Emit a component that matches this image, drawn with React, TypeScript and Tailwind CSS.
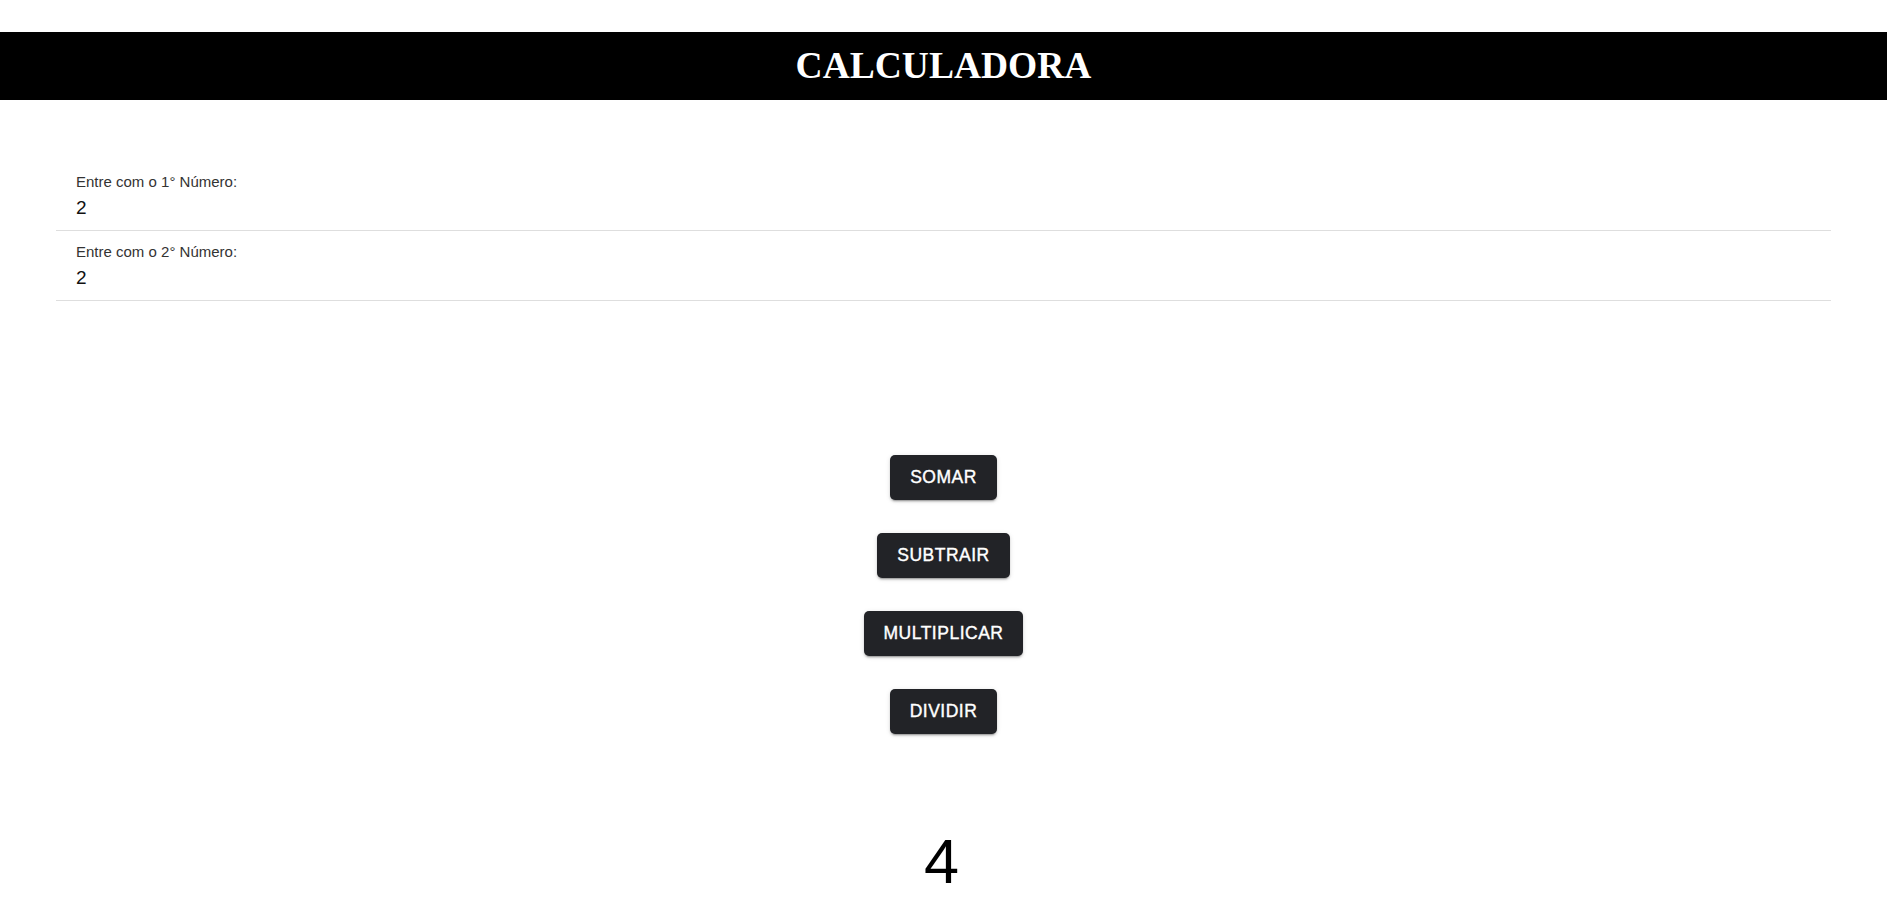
import { useState } from 'react';

const sans = { fontFamily: '"Liberation Sans", Arial, sans-serif' };

const ops = [
  { label: 'SOMAR', fn: (a: number, b: number) => a + b },
  { label: 'SUBTRAIR', fn: (a: number, b: number) => a - b },
  { label: 'MULTIPLICAR', fn: (a: number, b: number) => a * b },
  { label: 'DIVIDIR', fn: (a: number, b: number) => a / b },
];

function Field({ label, value, onChange }: { label: string; value: string; onChange: (v: string) => void }) {
  return (
    <div className="pt-[12px] pb-[11px] px-[20px] border-b border-[#dedede]">
      <label className="block text-[15px] leading-[17px] text-[#333]">{label}</label>
      <input
        value={value}
        onChange={(e) => onChange(e.target.value)}
        className="mt-[6px] block w-full h-[23px] text-[19px] leading-[23px] text-[#111] outline-none bg-transparent p-0"
        style={sans}
      />
    </div>
  );
}

export default function App() {
  const [n1, setN1] = useState('2');
  const [n2, setN2] = useState('2');
  const [result, setResult] = useState<number | string>(4);

  return (
    <div className="min-h-screen bg-white pt-[32px] pb-[40px]" style={sans}>
      <header className="h-[68px] bg-black flex items-center justify-center">
        <h1
          className="text-[37.5px] font-bold text-white leading-none"
          style={{ fontFamily: '"Liberation Serif", "Times New Roman", serif' }}
        >
          CALCULADORA
        </h1>
      </header>

      <div className="mx-[56px] mt-[61px]">
        <Field label="Entre com o 1° Número:" value={n1} onChange={setN1} />
        <Field label="Entre com o 2° Número:" value={n2} onChange={setN2} />
      </div>

      <div className="mt-[154px] flex flex-col items-center gap-[33px]">
        {ops.map((op) => (
          <button
            key={op.label}
            type="button"
            onClick={() => setResult(op.fn(Number(n1), Number(n2)))}
            className="h-[45px] px-[20px] rounded-[5px] bg-[#222327] text-white text-[17.5px] tracking-[0.5px] font-normal [-webkit-text-stroke:0.4px_#fff] shadow-[0_3px_1px_-2px_rgba(0,0,0,0.2),0_2px_2px_0_rgba(0,0,0,0.14),0_1px_5px_0_rgba(0,0,0,0.12)]"
          >
            {op.label}
          </button>
        ))}
      </div>

      <div className="mt-[96px] pr-[4px] text-center text-[63px] leading-none text-black">{result}</div>
    </div>
  );
}
